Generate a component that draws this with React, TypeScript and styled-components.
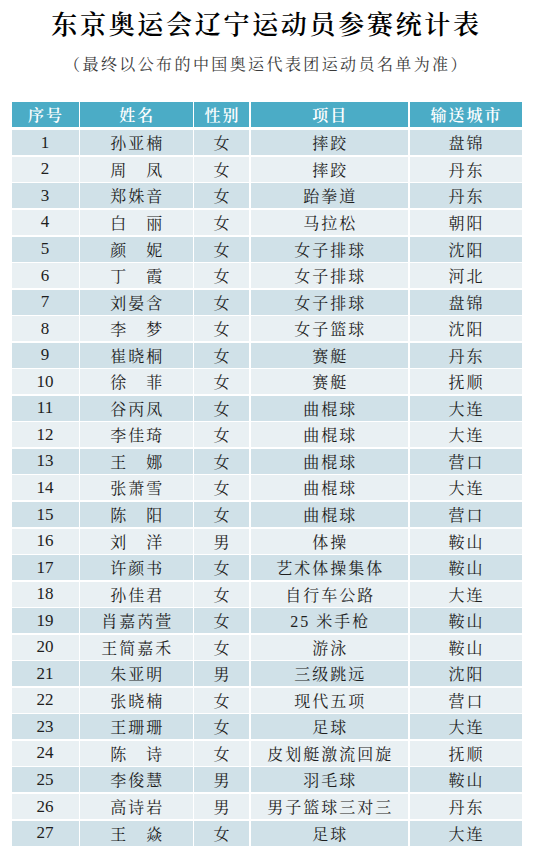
import React from "react";
import styled, { createGlobalStyle } from "styled-components";

const GlobalStyle = createGlobalStyle`
  html, body {
    margin: 0;
    padding: 0;
    background: #ffffff;
  }
  body {
    font-family: "Liberation Serif", "Noto Serif CJK SC", "Noto Sans CJK SC", serif;
  }
`;

const palette = {
  header: "#4bacc6",
  odd: "#d0e1e8",
  even: "#e9f0f3",
  text: "#1e1e1e",
};

const Page = styled.div`
  width: 533px;
  padding: 7px 0 8px;
  display: flex;
  flex-direction: column;
  align-items: center;
`;

const Title = styled.h1`
  margin: 0;
  font-family: "Noto Serif CJK SC", "Noto Sans CJK SC", serif;
  font-size: 26px;
  font-weight: 600;
  line-height: 32px;
  letter-spacing: 2.7px;
  color: #000;
`;

const Subtitle = styled.p`
  margin: 15px 0 0;
  font-family: "Noto Serif CJK SC", "Noto Sans CJK SC", serif;
  font-size: 16px;
  line-height: 20px;
  letter-spacing: 2.4px;
  color: #3a3a3a;
`;

const Table = styled.div`
  margin-top: 28px;
  width: 510px;
  display: flex;
  flex-direction: column;
  gap: 1.55px;
`;

const Row = styled.div<{ $head?: boolean; $odd?: boolean }>`
  display: grid;
  grid-template-columns: 67px 112.5px 55px 157.5px 112px;
  column-gap: 1.5px;
  height: 25px;
  margin-bottom: ${(p) => (p.$head ? "1.8px" : "0")};

  & > div {
    background: ${(p) =>
      p.$head ? palette.header : p.$odd ? palette.odd : palette.even};
    color: ${(p) => (p.$head ? "#fff" : palette.text)};
    font-weight: ${(p) => (p.$head ? 600 : 400)};
  }
`;

const Cell = styled.div`
  display: flex;
  align-items: center;
  justify-content: center;
  font-size: 16px;
  letter-spacing: 2px;
  white-space: nowrap;
  padding-left: 2px;
`;

const Num = styled(Cell)`
  font-family: "Liberation Serif", serif;
  font-size: 17px;
  letter-spacing: 0;
  padding-left: 0;
`;

type Athlete = [string, string, string, string];

const rows: Athlete[] = [
  ["孙亚楠", "女", "摔跤", "盘锦"],
  ["周　凤", "女", "摔跤", "丹东"],
  ["郑姝音", "女", "跆拳道", "丹东"],
  ["白　丽", "女", "马拉松", "朝阳"],
  ["颜　妮", "女", "女子排球", "沈阳"],
  ["丁　霞", "女", "女子排球", "河北"],
  ["刘晏含", "女", "女子排球", "盘锦"],
  ["李　梦", "女", "女子篮球", "沈阳"],
  ["崔晓桐", "女", "赛艇", "丹东"],
  ["徐　菲", "女", "赛艇", "抚顺"],
  ["谷丙凤", "女", "曲棍球", "大连"],
  ["李佳琦", "女", "曲棍球", "大连"],
  ["王　娜", "女", "曲棍球", "营口"],
  ["张萧雪", "女", "曲棍球", "大连"],
  ["陈　阳", "女", "曲棍球", "营口"],
  ["刘　洋", "男", "体操", "鞍山"],
  ["许颜书", "女", "艺术体操集体", "鞍山"],
  ["孙佳君", "女", "自行车公路", "大连"],
  ["肖嘉芮萱", "女", "25 米手枪", "鞍山"],
  ["王简嘉禾", "女", "游泳", "鞍山"],
  ["朱亚明", "男", "三级跳远", "沈阳"],
  ["张晓楠", "女", "现代五项", "营口"],
  ["王珊珊", "女", "足球", "大连"],
  ["陈　诗", "女", "皮划艇激流回旋", "抚顺"],
  ["李俊慧", "男", "羽毛球", "鞍山"],
  ["高诗岩", "男", "男子篮球三对三", "丹东"],
  ["王　焱", "女", "足球", "大连"],
];

const App: React.FC = () => {
  return (
    <>
      <GlobalStyle />
      <Page>
        <Title>东京奥运会辽宁运动员参赛统计表</Title>
        <Subtitle>（最终以公布的中国奥运代表团运动员名单为准）</Subtitle>
        <Table>
          <Row $head>
            <Cell>序号</Cell>
            <Cell>姓名</Cell>
            <Cell>性别</Cell>
            <Cell>项目</Cell>
            <Cell>输送城市</Cell>
          </Row>
          {rows.map((r, i) => (
            <Row key={i} $odd={i % 2 === 0}>
              <Num>{i + 1}</Num>
              <Cell>{r[0]}</Cell>
              <Cell>{r[1]}</Cell>
              <Cell>{r[2]}</Cell>
              <Cell>{r[3]}</Cell>
            </Row>
          ))}
        </Table>
      </Page>
    </>
  );
};

export default App;
